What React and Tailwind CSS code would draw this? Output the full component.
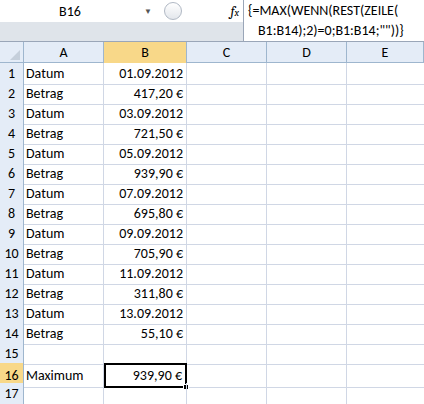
import React from 'react';

const rows = [
  ['Datum', '01.09.2012'], ['Betrag', '417,20 €'], ['Datum', '03.09.2012'], ['Betrag', '721,50 €'],
  ['Datum', '05.09.2012'], ['Betrag', '939,90 €'], ['Datum', '07.09.2012'], ['Betrag', '695,80 €'],
  ['Datum', '09.09.2012'], ['Betrag', '705,90 €'], ['Datum', '11.09.2012'], ['Betrag', '311,80 €'],
  ['Datum', '13.09.2012'], ['Betrag', '55,10 €'], ['', ''], ['Maximum', '939,90 €'], ['', ''],
];

const cols = 'grid grid-cols-[24px_80px_83px_80px_80px_77px]';

export default function App() {
  return (
    <div className="w-[424px] h-[404px] overflow-hidden bg-white text-[14px] text-black" style={{ fontFamily: 'Calibri, "Liberation Sans", Arial, sans-serif' }}>
      <div className="flex h-[42px] border-b border-[#9aa6b8]">
        <div className="w-[243px] flex flex-col">
          <div className="h-[22px] flex items-center bg-white">
            <div className="w-[140px] text-center">B16</div>
            <span className="text-[8px] text-[#555] ml-1">▼</span>
            <div className="ml-3 w-[18px] h-[18px] rounded-full border border-[#b0b8c4] bg-gradient-to-b from-white to-[#e3e7ec]" />
            <div className="flex-1" />
            <span className="italic font-serif text-[14px] mr-1">f<span className="text-[10px]">x</span></span>
          </div>
          <div className="flex-1 bg-[#dfe4ea]" />
        </div>
        <div className="flex-1 border-l border-[#9aa6b8] px-1 pt-[1px] leading-[20px] text-[14px]">
          <div>{'{=MAX(WENN(REST(ZEILE('}</div>
          <div className="pl-[10px]">{'B1:B14);2)=0;B1:B14;""))}'}</div>
        </div>
      </div>
      <div className={`${cols} h-[21px] bg-[#e4ecf7] border-b border-[#9eb6ce]`}>
        <div className="border-r border-[#9eb6ce] flex items-end justify-end p-[3px]">
          <div className="w-0 h-0 border-l-[10px] border-l-transparent border-b-[10px] border-b-[#c5cfdb]" />
        </div>
        {['A', 'B', 'C', 'D', 'E'].map((c) => (
          <div key={c} className={`flex items-center justify-center border-r border-[#9eb6ce] ${c === 'B' ? 'bg-[#f8d889]' : ''}`}>{c}</div>
        ))}
      </div>
      {rows.map(([a, b], i) => (
        <div key={i} className={`${cols} h-[20px]`}>
          <div className={`flex items-center justify-center border-r border-b border-[#9eb6ce] ${i === 15 ? 'bg-[#f8d889]' : 'bg-[#e4ecf7]'}`}>{i + 1}</div>
          <div className="border-r border-b border-[#d0d7e5] px-[2px] flex items-center">{a}</div>
          <div className={`relative px-[3px] flex items-center justify-end ${i === 15 ? 'border-2 border-black' : 'border-r border-b border-[#d0d7e5]'}`}>
            {b}
            {i === 15 && <div className="absolute -right-[4px] -bottom-[4px] w-[6px] h-[6px] bg-black border border-white" />}
          </div>
          <div className="border-r border-b border-[#d0d7e5]" />
          <div className="border-r border-b border-[#d0d7e5]" />
          <div className="border-b border-[#d0d7e5]" />
        </div>
      ))}
    </div>
  );
}
